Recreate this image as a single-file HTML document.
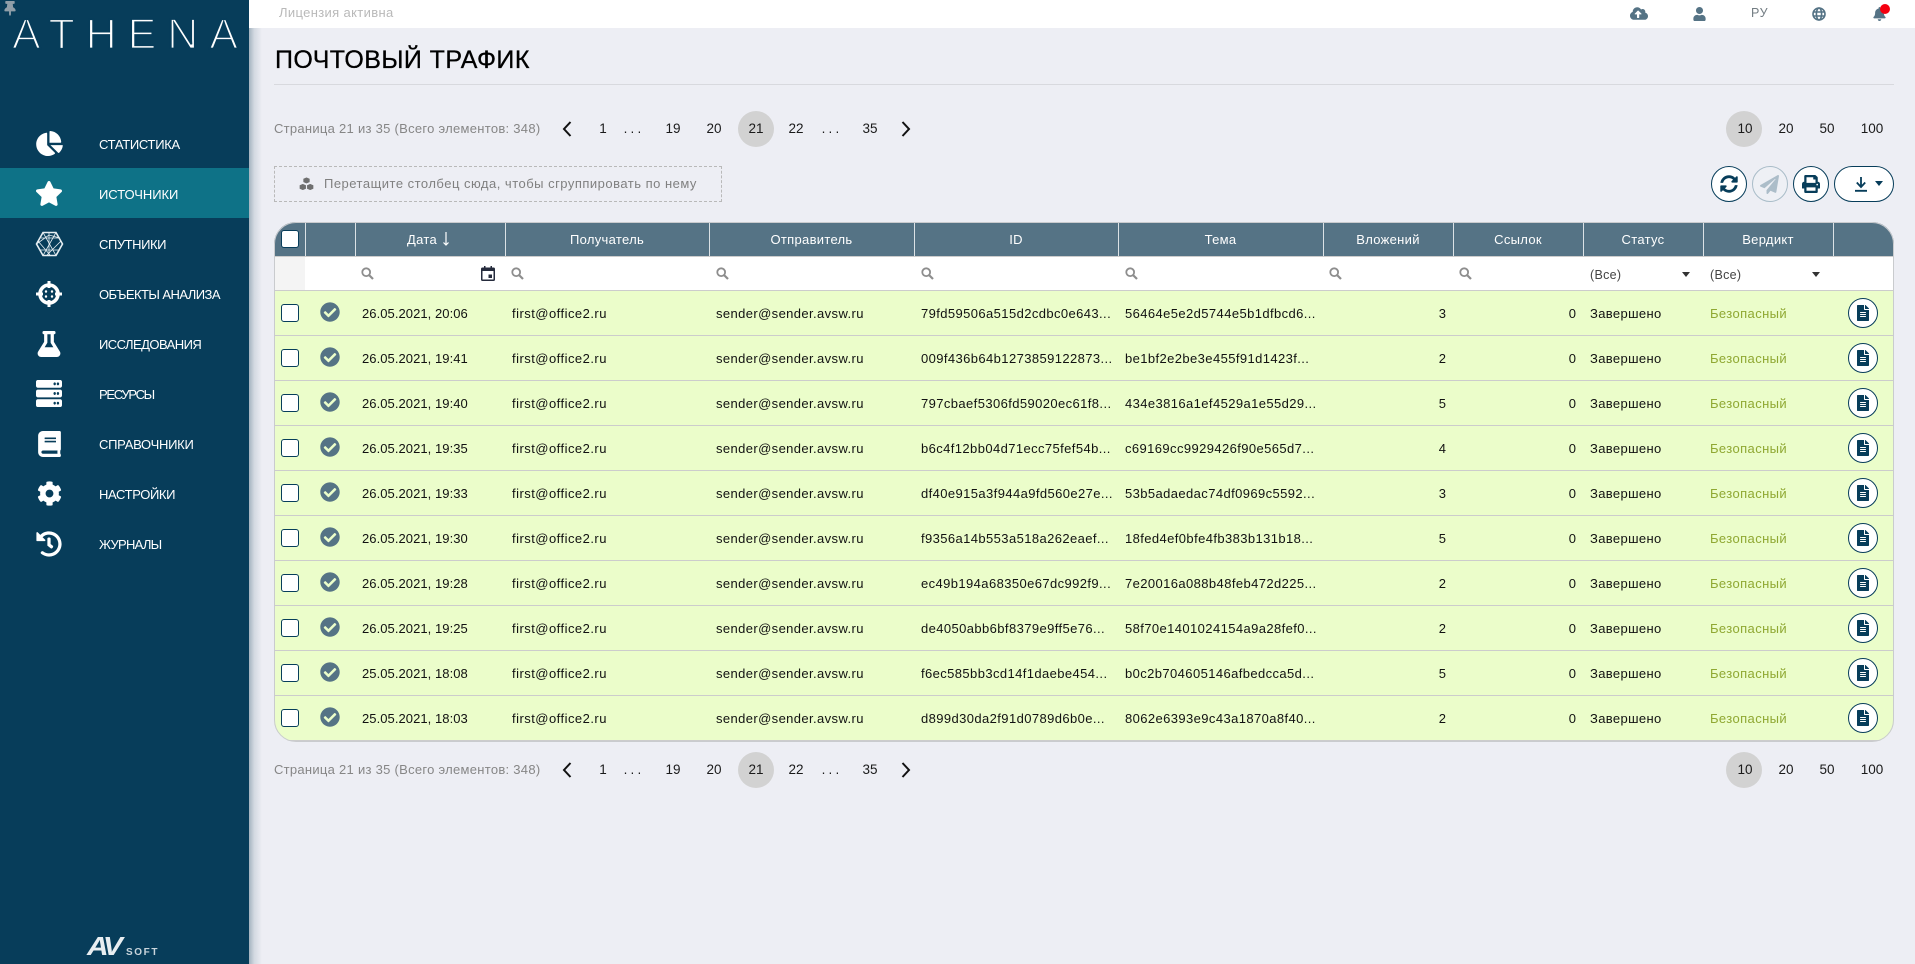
<!DOCTYPE html>
<html lang="ru"><head><meta charset="utf-8"><title>Почтовый трафик</title>
<style>
*{box-sizing:border-box;margin:0;padding:0}
html,body{width:1915px;height:964px;overflow:hidden;background:#edeef4;font-family:"Liberation Sans","Noto Sans CJK JP",sans-serif;color:#111}
.a{position:absolute;white-space:nowrap}
#side{position:absolute;left:0;top:0;width:249px;height:964px;background:#073d5a;z-index:3}
#shadow{position:absolute;left:249px;top:28px;width:13px;height:936px;background:linear-gradient(90deg,#a3b3bf,#d3d9e1 40%,#edeef4);z-index:1}
#top{position:absolute;left:249px;top:0;width:1666px;height:28px;background:#fff;z-index:2}
.m{position:absolute;left:99px;color:#fff;font-size:13px;letter-spacing:-.55px;line-height:52px;height:50px;white-space:nowrap}
.mi{position:absolute;fill:#fff}
.pg{position:absolute;font-size:13.5px;line-height:36px;height:36px;width:36px;text-align:center;color:#1a1a1a}
.cir{position:absolute;width:36px;height:36px;border-radius:50%;background:#d2d2d2}
.pi{position:absolute;font-size:13px;color:#868686;line-height:36px;height:36px;white-space:nowrap;letter-spacing:.28px}
.btn{position:absolute;top:166px;height:36px;width:36px;border:1.5px solid #073d5a;border-radius:18px;background:#fff}
#tbl{position:absolute;left:0;top:0;width:1915px;height:964px;clip-path:inset(222px 21px 222px 274px round 22px)}
#tborder{position:absolute;left:274px;top:222px;width:1620px;height:520px;border:1px solid #c9cbce;border-radius:22px;pointer-events:none;z-index:2}
.hd{position:absolute;left:274px;top:222px;width:1620px;height:34px;background:#557385}
.sep{position:absolute;top:222px;width:1px;height:34px;background:#dbe2e6}
.h{position:absolute;top:222px;height:34px;line-height:35px;text-align:center;color:#fff;font-size:13px;letter-spacing:.3px;white-space:nowrap}
.s{position:absolute;top:267px;width:13px;height:13px;fill:none;stroke:#8d8d8d;stroke-width:1.8}
.r{position:absolute;left:274px;width:1620px;height:45px;background:#ebfdca;border-bottom:1px solid #ccc}
.r span{position:absolute;top:0;line-height:46px;font-size:13px;white-space:nowrap;color:#111}
.cb{position:absolute;left:7px;top:13px;width:18px;height:18px;border:1.5px solid #073d5a;border-radius:3px;background:#fff}
.ok{position:absolute;left:46px;top:11px;width:20px;height:20px;fill:#557385}
.d{left:88px;letter-spacing:.06px}
.e{left:238px;letter-spacing:.47px}
.f{left:442px;letter-spacing:.39px}
.i{left:647px;letter-spacing:.4px}
.t{left:851px;letter-spacing:.4px}
.n1{right:448px}
.n2{right:318px}
.st{left:1316px;letter-spacing:.36px}
.v{left:1436px;color:#8fa832!important;letter-spacing:.4px}
.dc{position:absolute;left:1574px;top:7px;width:30px;height:30px;border:1.5px solid #073d5a;border-radius:50%;background:#fff}
.dc svg{position:absolute;left:7.5px;top:5.5px;width:12px;height:16px;fill:#073d5a}
</style></head><body>
<svg width="0" height="0" style="position:absolute"><defs>
<symbol id="ok" viewBox="0 0 512 512"><path d="M504 256c0 136.967-111.033 248-248 248S8 392.967 8 256 119.033 8 256 8s248 111.033 248 248zM227.314 387.314l184-184c6.248-6.248 6.248-16.379 0-22.627l-22.627-22.627c-6.248-6.249-16.379-6.249-22.628 0L216 308.118l-70.059-70.059c-6.248-6.248-16.379-6.248-22.628 0l-22.627 22.627c-6.248 6.248-6.248 16.379 0 22.627l104 104c6.249 6.249 16.379 6.249 22.628.001z"/></symbol>
<symbol id="file" viewBox="0 0 384 512"><path d="M224 136V0H24C10.7 0 0 10.7 0 24v464c0 13.3 10.7 24 24 24h336c13.3 0 24-10.7 24-24V160H248c-13.2 0-24-10.8-24-24zm64 236c0 6.6-5.4 12-12 12H108c-6.6 0-12-5.4-12-12v-8c0-6.6 5.4-12 12-12h168c6.6 0 12 5.4 12 12v8zm0-64c0 6.6-5.4 12-12 12H108c-6.6 0-12-5.4-12-12v-8c0-6.6 5.4-12 12-12h168c6.6 0 12 5.4 12 12v8zm0-72v8c0 6.6-5.4 12-12 12H108c-6.6 0-12-5.4-12-12v-8c0-6.6 5.4-12 12-12h168c6.6 0 12 5.4 12 12zm96-114.1v6.1H256V0h6.1c6.4 0 12.5 2.5 17 7l97.9 98c4.5 4.5 7 10.6 7 16.9z"/></symbol>
<symbol id="mag" viewBox="0 0 13 13"><circle cx="5.2" cy="5.2" r="3.9"/><path d="M8 8l4 4" stroke-width="2.2"/></symbol>
</defs></svg>

<div id="side">
<svg class="a" style="left:3px;top:1px;fill:#8f9ea8" width="14" height="15" viewBox="0 0 384 512"><path d="M298.028 214.267L285.793 96H328c13.255 0 24-10.745 24-24V24c0-13.255-10.745-24-24-24H56C42.745 0 32 10.745 32 24v48c0 13.255 10.745 24 24 24h42.207L85.972 214.267C37.465 236.82 0 277.261 0 328c0 13.255 10.745 24 24 24h136v104.007c0 1.242.289 2.467.845 3.578l24 48c2.941 5.882 11.364 5.893 14.311 0l24-48a8.008 8.008 0 0 0 .845-3.578V352h136c13.255 0 24-10.745 24-24-.001-51.183-37.983-91.42-85.973-113.733z"/></svg>
<svg class="a" style="left:0;top:0" width="249" height="60"><text x="12" y="48.500" textLength="226" font-family="Liberation Sans" font-size="43" fill="#fff" stroke="#073d5a" stroke-width="1.800">ATHENA</text></svg>

<div class="a" style="left:0;top:168px;width:249px;height:50px;background:#0e7287"></div>
<svg class="mi" style="left:36px;top:131px" width="27" height="25" viewBox="0 0 544 512"><path d="M527.79 288H290.5l158.03 158.03c6.04 6.04 15.98 6.53 22.19.68 38.7-36.46 65.32-85.61 73.13-140.86 1.34-9.46-6.51-17.85-16.06-17.85zm-15.83-64.8C503.72 103.74 408.26 8.28 288.8.04 279.68-.59 272 7.1 272 16.24V240h223.77c9.14 0 16.82-7.68 16.19-16.8zM224 288V50.71c0-9.55-8.39-17.4-17.84-16.06C86.99 51.49-4.1 155.6.14 280.37 4.5 408.51 114.83 513.59 243.03 511.98c50.4-.63 96.97-16.87 135.26-44.03 7.9-5.6 8.42-17.23 1.57-24.08L224 288z"/></svg>
<div class="m" style="top:119px;letter-spacing:-.3px">СТАТИСТИКА</div>
<svg class="mi" style="left:35px;top:181px" width="28" height="25" viewBox="0 0 576 512"><path d="M259.3 17.8L194 150.2 47.9 171.5c-26.2 3.8-36.7 36.1-17.7 54.6l105.7 103-25 145.5c-4.5 26.3 23.2 46 46.4 33.7L288 439.6l130.7 68.7c23.2 12.2 50.9-7.4 46.4-33.7l-25-145.5 105.7-103c19-18.5 8.5-50.8-17.7-54.6L382 150.2 316.7 17.8c-11.7-23.6-45.6-23.9-57.4 0z"/></svg>
<div class="m" style="top:169px;letter-spacing:-.05px">ИСТОЧНИКИ</div>
<svg class="a" style="left:35px;top:231px" width="29" height="26" viewBox="0 0 29 26" fill="none" stroke="#e6eef2"><path stroke-width="1.6" d="M8 1.5h13L27.5 13 21 24.5H8L1.5 13z"/><path stroke-width=".8" d="M8 1.5L21 24.5M21 1.5L8 24.5M1.5 13L14 4l11 3M3 10l12 14M26 10L12 24M6 7l18 0M5 19l19 0M14 2v22"/></svg>
<div class="m" style="top:219px;letter-spacing:-.45px">СПУТНИКИ</div>
<svg class="a" style="left:36px;top:281px" width="26" height="26" viewBox="0 0 26 26" fill="none" stroke="#fff"><circle cx="13" cy="13" r="9" stroke-width="3.6"/><path stroke-width="3" d="M13 0v7M13 19v7M0 13h7M19 13h7"/><path stroke-width="2.4" d="M10 10.5v.1M16 10.5v.1M10 15.5v.1M16 15.5v.1" stroke-linecap="round"/></svg>
<div class="m" style="top:269px">ОБЪЕКТЫ АНАЛИЗА</div>
<svg class="mi" style="left:37px;top:331px" width="24" height="26" viewBox="0 0 448 512"><path d="M437.2 403.5L320 215V64h8c13.3 0 24-10.7 24-24V24c0-13.3-10.7-24-24-24H120c-13.3 0-24 10.7-24 24v16c0 13.3 10.7 24 24 24h8v151L10.8 403.5C-18.5 450.6 15.3 512 70.9 512h306.2c55.7 0 89.4-61.5 60.1-108.5zM137.9 320l48.2-77.6c3.7-5.2 5.8-11.6 5.8-18.4V64h64v160c0 6.9 2.2 13.2 5.8 18.4l48.2 77.6h-172z"/></svg>
<div class="m" style="top:319px">ИССЛЕДОВАНИЯ</div>
<svg class="mi" style="left:36px;top:380px" width="26" height="27" viewBox="0 32 512 448" preserveAspectRatio="none"><path d="M480 160H32c-17.673 0-32-14.327-32-32V64c0-17.673 14.327-32 32-32h448c17.673 0 32 14.327 32 32v64c0 17.673-14.327 32-32 32zm-48-88c-13.255 0-24 10.745-24 24s10.745 24 24 24 24-10.745 24-24-10.745-24-24-24zm-64 0c-13.255 0-24 10.745-24 24s10.745 24 24 24 24-10.745 24-24-10.745-24-24-24zm112 248H32c-17.673 0-32-14.327-32-32v-64c0-17.673 14.327-32 32-32h448c17.673 0 32 14.327 32 32v64c0 17.673-14.327 32-32 32zm-48-88c-13.255 0-24 10.745-24 24s10.745 24 24 24 24-10.745 24-24-10.745-24-24-24zm-64 0c-13.255 0-24 10.745-24 24s10.745 24 24 24 24-10.745 24-24-10.745-24-24-24zm112 248H32c-17.673 0-32-14.327-32-32v-64c0-17.673 14.327-32 32-32h448c17.673 0 32 14.327 32 32v64c0 17.673-14.327 32-32 32zm-48-88c-13.255 0-24 10.745-24 24s10.745 24 24 24 24-10.745 24-24-10.745-24-24-24zm-64 0c-13.255 0-24 10.745-24 24s10.745 24 24 24 24-10.745 24-24-10.745-24-24-24z"/></svg>
<div class="m" style="top:369px;letter-spacing:-1.3px">РЕСУРСЫ</div>
<svg class="mi" style="left:38px;top:431px" width="23" height="26" viewBox="0 0 448 512"><path d="M448 360V24c0-13.3-10.7-24-24-24H96C43 0 0 43 0 96v320c0 53 43 96 96 96h328c13.3 0 24-10.7 24-24v-16c0-7.5-3.5-14.3-8.9-18.7-4.2-15.4-4.2-59.3 0-74.7 5.4-4.3 8.9-11.1 8.9-18.6zM128 134c0-3.3 2.7-6 6-6h212c3.3 0 6 2.7 6 6v20c0 3.3-2.7 6-6 6H134c-3.3 0-6-2.7-6-6v-20zm0 64c0-3.3 2.7-6 6-6h212c3.3 0 6 2.7 6 6v20c0 3.3-2.7 6-6 6H134c-3.3 0-6-2.7-6-6v-20zm253.4 250H96c-17.7 0-32-14.3-32-32 0-17.6 14.4-32 32-32h285.4c-1.9 17.1-1.9 46.9 0 64z"/></svg>
<div class="m" style="top:419px;letter-spacing:-.28px">СПРАВОЧНИКИ</div>
<svg class="mi" style="left:37px;top:481px" width="25" height="25" viewBox="0 0 512 512"><path d="M487.4 315.7l-42.6-24.6c4.3-23.2 4.3-47 0-70.2l42.6-24.6c4.9-2.8 7.1-8.6 5.5-14-11.1-35.6-30-67.8-54.7-94.6-3.8-4.1-10-5.1-14.8-2.3L380.8 110c-17.9-15.4-38.5-27.3-60.8-35.1V25.8c0-5.6-3.9-10.5-9.4-11.7-36.7-8.2-74.3-7.8-109.2 0-5.5 1.2-9.4 6.1-9.4 11.7V75c-22.2 7.9-42.8 19.8-60.8 35.1L88.7 85.5c-4.9-2.8-11-1.9-14.8 2.3-24.7 26.7-43.6 58.9-54.7 94.6-1.7 5.4.6 11.2 5.5 14L67.3 221c-4.3 23.2-4.3 47 0 70.2l-42.6 24.6c-4.9 2.8-7.1 8.6-5.5 14 11.1 35.6 30 67.8 54.7 94.6 3.8 4.1 10 5.1 14.8 2.3l42.6-24.6c17.9 15.4 38.5 27.3 60.8 35.1v49.2c0 5.6 3.9 10.5 9.4 11.7 36.7 8.2 74.3 7.8 109.2 0 5.5-1.2 9.4-6.1 9.4-11.7v-49.2c22.2-7.9 42.8-19.8 60.8-35.1l42.6 24.6c4.9 2.8 11 1.9 14.8-2.3 24.7-26.7 43.6-58.9 54.7-94.6 1.5-5.5-.7-11.3-5.6-14.1zM256 336c-44.1 0-80-35.9-80-80s35.9-80 80-80 80 35.9 80 80-35.9 80-80 80z"/></svg>
<div class="m" style="top:469px;letter-spacing:-.37px">НАСТРОЙКИ</div>
<svg class="mi" style="left:36px;top:531px" width="26" height="26" viewBox="0 0 512 512"><path d="M504 255.531c.253 136.64-111.18 248.372-247.82 248.468-59.015.042-113.223-20.53-155.822-54.911-11.077-8.94-11.905-25.541-1.839-35.607l11.267-11.267c8.609-8.609 22.353-9.551 31.891-1.984C173.062 425.135 212.781 440 256 440c101.705 0 184-82.311 184-184 0-101.705-82.311-184-184-184-48.814 0-93.149 18.969-126.068 49.932l50.754 50.754c10.08 10.08 2.941 27.314-11.313 27.314H24c-8.837 0-16-7.163-16-16V38.627c0-14.254 17.234-21.393 27.314-11.314l49.372 49.372C129.209 34.136 189.552 8 256 8c136.81 0 247.747 110.78 248 247.531zm-180.912 78.784l9.823-12.63c8.138-10.463 6.253-25.542-4.21-33.679L288 256.349V152c0-13.255-10.745-24-24-24h-16c-13.255 0-24 10.745-24 24v135.651l65.409 50.874c10.463 8.137 25.541 6.253 33.679-4.21z"/></svg>
<div class="m" style="top:519px;letter-spacing:-.75px">ЖУРНАЛЫ</div>

<div class="a" style="left:87px;top:934px;color:#e8eef1;font-size:26px;line-height:24px;font-weight:bold;font-style:italic;letter-spacing:-3px;transform:scaleX(1.15);transform-origin:left">AV</div>
<div class="a" style="left:126px;top:947px;color:#c9d5dc;font-size:10px;line-height:12px;font-weight:bold;letter-spacing:1.6px">SOFT</div>
</div>

<div id="shadow"></div>
<div id="top">
<div class="a" style="left:30px;top:0;line-height:26px;font-size:13px;color:#b9b9b9;letter-spacing:.35px">Лицензия активна</div>
<svg class="a" style="left:1381px;top:6px;fill:#557385" width="18" height="15" viewBox="0 0 640 512"><path d="M537.6 226.6c4.1-10.7 6.4-22.4 6.4-34.6 0-53-43-96-96-96-19.7 0-38.1 6-53.3 16.2C367 64.2 315.3 32 256 32c-88.4 0-160 71.6-160 160 0 2.7.1 5.4.2 8.1C40.2 219.8 0 273.2 0 336c0 79.5 64.5 144 144 144h368c70.7 0 128-57.3 128-128 0-61.9-44-113.6-102.4-125.4zM393.4 288H328v112c0 8.8-7.2 16-16 16h-48c-8.8 0-16-7.2-16-16V288h-65.4c-14.3 0-21.4-17.2-11.3-27.3l105.4-105.4c6.2-6.2 16.4-6.2 22.6 0l105.4 105.4c10.1 10.1 2.9 27.3-11.3 27.3z"/></svg>
<svg class="a" style="left:1444px;top:7px;fill:#557385" width="13" height="14" viewBox="0 0 448 512"><path d="M224 256c70.7 0 128-57.3 128-128S294.7 0 224 0 96 57.3 96 128s57.3 128 128 128zm89.6 32h-16.7c-22.2 10.2-46.9 16-72.9 16s-50.6-5.8-72.9-16h-16.7C60.2 288 0 348.2 0 422.4V464c0 26.5 21.5 48 48 48h352c26.5 0 48-21.5 48-48v-41.6c0-74.2-60.2-134.4-134.4-134.4z"/></svg>
<div class="a" style="left:1502px;top:0;line-height:27px;font-size:12.5px;color:#737d83;letter-spacing:.6px">РУ</div>
<svg class="a" style="left:1563px;top:7px" width="14" height="14" viewBox="0 0 14 14" fill="none" stroke="#557385" stroke-width="1.6"><circle cx="7" cy="7" r="6"/><ellipse cx="7" cy="7" rx="2.6" ry="6"/><path d="M1 5h12M1 9h12"/></svg>
<svg class="a" style="left:1624px;top:7px;fill:#557385" width="13" height="14" viewBox="0 0 448 512"><path d="M224 512c35.32 0 63.97-28.65 63.97-64H160.03c0 35.35 28.65 64 63.97 64zm215.39-149.71c-19.32-20.76-55.47-51.99-55.47-154.29 0-77.7-54.48-139.9-127.94-155.16V32c0-17.67-14.32-32-31.98-32s-31.98 14.33-31.98 32v20.84C118.56 68.1 64.08 130.3 64.08 208c0 102.3-36.15 133.53-55.47 154.29-6 6.45-8.66 14.16-8.61 21.71.11 16.4 12.98 32 32.1 32h383.8c19.12 0 32-15.6 32.1-32 .05-7.55-2.61-15.27-8.61-21.71z"/></svg>
<div class="a" style="left:1631px;top:4px;width:10px;height:10px;border-radius:50%;background:#f5000f"></div>
</div>

<div class="a" style="left:275px;top:45px;font-size:25px;line-height:30px;color:#000;letter-spacing:.42px;-webkit-text-stroke:.3px #000">ПОЧТОВЫЙ ТРАФИК</div>
<div class="a" style="left:274px;top:84px;width:1620px;height:1px;background:#d8d9de"></div>

<!-- top pager -->
<div class="pi" style="left:274px;top:111px">Страница 21 из 35 (Всего элементов: 348)</div>
<svg class="a" style="left:561px;top:121px" width="12" height="16" viewBox="0 0 12 16" fill="none" stroke="#111" stroke-width="2"><path d="M9.5 1L3 8l6.5 7"/></svg>
<div class="pg" style="left:585px;top:111px">1</div>
<div class="pg" style="left:616px;top:111px;letter-spacing:3.2px">...</div>
<div class="pg" style="left:655px;top:111px">19</div>
<div class="pg" style="left:696px;top:111px">20</div>
<div class="cir" style="left:738px;top:111px"></div>
<div class="pg" style="left:738px;top:111px">21</div>
<div class="pg" style="left:778px;top:111px">22</div>
<div class="pg" style="left:814px;top:111px;letter-spacing:3.2px">...</div>
<div class="pg" style="left:852px;top:111px">35</div>
<svg class="a" style="left:900px;top:121px" width="12" height="16" viewBox="0 0 12 16" fill="none" stroke="#111" stroke-width="2"><path d="M2.5 1L9 8l-6.5 7"/></svg>
<div class="cir" style="left:1726px;top:111px"></div>
<div class="pg" style="left:1727px;top:111px">10</div>
<div class="pg" style="left:1768px;top:111px">20</div>
<div class="pg" style="left:1809px;top:111px">50</div>
<div class="pg" style="left:1854px;top:111px">100</div>

<!-- group panel -->
<div class="a" style="left:274px;top:166px;width:448px;height:36px;border:1px dashed #b9b9b9"></div>
<svg class="a" style="left:299px;top:177px" width="15" height="14" viewBox="0 0 15 14" fill="#6f6f6f" stroke="#edeef4" stroke-width=".7"><path d="M7.5 0l3.5 1.5v3.800l-3.500 1.500L4 5.300V1.500z"/><path d="M3.800 6.500l3.500 1.500v4l-3.500 1.500L.3 12V8z"/><path d="M11.200 6.500l3.500 1.500v4l-3.500 1.500L7.700 12V8z"/></svg>
<div class="a" style="left:324px;top:166px;line-height:36px;font-size:13px;color:#808080;letter-spacing:.49px">Перетащите столбец сюда, чтобы сгруппировать по нему</div>

<!-- toolbar -->
<div class="btn" style="left:1711px"><svg class="a" style="left:8px;top:7.5px;fill:#073d5a" width="18" height="18" viewBox="0 0 512 512"><path d="M370.72 133.28C339.458 104.008 298.888 87.962 255.848 88c-77.458.068-144.328 53.178-162.791 126.85-1.344 5.363-6.122 9.15-11.651 9.15H24.103c-7.498 0-13.194-6.807-11.807-14.176C33.933 94.924 134.813 8 256 8c66.448 0 126.791 26.136 171.315 68.685L463.03 40.97C478.149 25.851 504 36.559 504 57.941V192c0 13.255-10.745 24-24 24H345.941c-21.382 0-32.09-25.851-16.971-40.971l41.75-41.749zM32 296h134.059c21.382 0 32.09 25.851 16.971 40.971l-41.75 41.75c31.262 29.273 71.835 45.319 114.876 45.28 77.418-.07 144.315-53.144 162.787-126.849 1.344-5.363 6.122-9.15 11.651-9.15h57.304c7.498 0 13.194 6.807 11.807 14.176C478.067 417.076 377.187 504 256 504c-66.448 0-126.791-26.136-171.315-68.685L48.97 471.03C33.851 486.149 8 475.441 8 454.059V320c0-13.255 10.745-24 24-24z"/></svg></div>
<div class="btn" style="left:1752px;border-color:#a9bcc8;background:#eef0f5"><svg class="a" style="left:7px;top:8px;fill:#acbdc9" width="19" height="19" viewBox="0 0 512 512"><path d="M476 3.2L12.5 270.6c-18.1 10.4-15.8 35.6 2.2 43.2L121 358.4l287.3-253.2c5.5-4.9 13.3 2.6 8.6 8.3L176 407v80.5c0 23.6 28.5 32.9 42.5 15.8L282 426l124.6 52.2c14.2 6 30.4-2.9 33-18.2l72-432C515 7.8 493.3-6.8 476 3.2z"/></svg></div>
<div class="btn" style="left:1793px"><svg class="a" style="left:8px;top:7.5px;fill:#073d5a" width="18" height="18" viewBox="0 0 512 512"><path d="M448 192V77.25c0-8.49-3.37-16.62-9.37-22.63L393.37 9.37c-6-6-14.14-9.37-22.63-9.37H96C78.33 0 64 14.33 64 32v160c-35.35 0-64 28.65-64 64v112c0 8.84 7.16 16 16 16h48v96c0 17.67 14.33 32 32 32h320c17.67 0 32-14.33 32-32v-96h48c8.84 0 16-7.16 16-16V256c0-35.35-28.65-64-64-64zm-64 256H128v-96h256v96zm0-224H128V64h192v48c0 8.84 7.16 16 16 16h48v96zm48 72c-13.25 0-24-10.75-24-24 0-13.26 10.75-24 24-24s24 10.74 24 24c0 13.25-10.75 24-24 24z"/></svg></div>
<div class="btn" style="left:1834px;width:60px"><svg class="a" style="left:18.5px;top:9.5px" width="14" height="15" viewBox="0 0 14 15" fill="none" stroke="#073d5a" stroke-width="1.8"><path d="M7 0v9M2.8 5.500L7 10l4.200-4.500M1 13.800h12"/></svg><svg class="a" style="left:39.5px;top:14px;fill:#073d5a" width="8" height="5" viewBox="0 0 8 5"><path d="M0 0h8L4 5z"/></svg></div>

<!-- table -->
<div id="tbl">
<div class="hd"></div>
<i class="sep" style="left:305px"></i><i class="sep" style="left:355px"></i><i class="sep" style="left:505px"></i><i class="sep" style="left:709px"></i><i class="sep" style="left:914px"></i><i class="sep" style="left:1118px"></i><i class="sep" style="left:1323px"></i><i class="sep" style="left:1453px"></i><i class="sep" style="left:1583px"></i><i class="sep" style="left:1703px"></i><i class="sep" style="left:1833px"></i>
<div class="a" style="left:281px;top:230px;width:18px;height:18px;border:1.5px solid #073d5a;border-radius:3px;background:#fff"></div>
<div class="h" style="left:407px">Дата</div>
<svg class="a" style="left:442px;top:232px" width="8" height="14" viewBox="0 0 8 14" fill="none" stroke="#fff" stroke-width="1.2"><path d="M4 0v13M1.500 10.500L4 13l2.500-2.500"/></svg>
<div class="h" style="left:505px;width:204px">Получатель</div>
<div class="h" style="left:709px;width:205px">Отправитель</div>
<div class="h" style="left:914px;width:204px">ID</div>
<div class="h" style="left:1118px;width:205px">Тема</div>
<div class="h" style="left:1323px;width:130px">Вложений</div>
<div class="h" style="left:1453px;width:130px">Ссылок</div>
<div class="h" style="left:1583px;width:120px">Статус</div>
<div class="h" style="left:1703px;width:130px">Вердикт</div>

<div class="a" style="left:274px;top:256px;width:1620px;height:35px;background:#fff;border-top:1px solid #ccc;border-bottom:1px solid #ccc"></div>
<div class="a" style="left:275px;top:257px;width:30px;height:33px;background:#f4f4f4"></div>
<svg class="s" style="left:361px"><use href="#mag"/></svg>
<svg class="a" style="left:481px;top:266px" width="14" height="15" viewBox="0 0 14 15"><path fill="#252b3c" d="M1.500 1.500h11A1.500 1.500 0 0 1 14 3v10.500a1.500 1.500 0 0 1-1.500 1.500h-11A1.500 1.500 0 0 1 0 13.500V3a1.500 1.500 0 0 1 1.500-1.500zM3 0h1.500v2H3zM9.500 0H11v2H9.500z"/><path fill="#fff" d="M1.500 5h11v8.500h-11z"/><path fill="#252b3c" d="M7.500 8.500h3.500v3.500H7.500z"/></svg>
<svg class="s" style="left:511px"><use href="#mag"/></svg>
<svg class="s" style="left:716px"><use href="#mag"/></svg>
<svg class="s" style="left:921px"><use href="#mag"/></svg>
<svg class="s" style="left:1125px"><use href="#mag"/></svg>
<svg class="s" style="left:1329px"><use href="#mag"/></svg>
<svg class="s" style="left:1459px"><use href="#mag"/></svg>
<div class="a" style="left:1590px;top:258px;line-height:34px;font-size:12.5px;color:#444;letter-spacing:.3px">(Все)</div>
<svg class="a" style="left:1682px;top:272px;fill:#333" width="8" height="5" viewBox="0 0 8 5"><path d="M0 0h8L4 5z"/></svg>
<div class="a" style="left:1710px;top:258px;line-height:34px;font-size:12.5px;color:#444;letter-spacing:.3px">(Все)</div>
<svg class="a" style="left:1812px;top:272px;fill:#333" width="8" height="5" viewBox="0 0 8 5"><path d="M0 0h8L4 5z"/></svg>

<div class="r" style="top:291px"><i class="cb"></i><svg class="ok"><use href="#ok"/></svg><span class="d">26.05.2021, 20:06</span><span class="e">first@office2.ru</span><span class="f">sender@sender.avsw.ru</span><span class="i">79fd59506a515d2cdbc0e643...</span><span class="t">56464e5e2d5744e5b1dfbcd6...</span><span class="n1">3</span><span class="n2">0</span><span class="st">Завершено</span><span class="v">Безопасный</span><div class="dc"><svg><use href="#file"/></svg></div></div>
<div class="r" style="top:336px"><i class="cb"></i><svg class="ok"><use href="#ok"/></svg><span class="d">26.05.2021, 19:41</span><span class="e">first@office2.ru</span><span class="f">sender@sender.avsw.ru</span><span class="i">009f436b64b1273859122873...</span><span class="t">be1bf2e2be3e455f91d1423f...</span><span class="n1">2</span><span class="n2">0</span><span class="st">Завершено</span><span class="v">Безопасный</span><div class="dc"><svg><use href="#file"/></svg></div></div>
<div class="r" style="top:381px"><i class="cb"></i><svg class="ok"><use href="#ok"/></svg><span class="d">26.05.2021, 19:40</span><span class="e">first@office2.ru</span><span class="f">sender@sender.avsw.ru</span><span class="i">797cbaef5306fd59020ec61f8...</span><span class="t">434e3816a1ef4529a1e55d29...</span><span class="n1">5</span><span class="n2">0</span><span class="st">Завершено</span><span class="v">Безопасный</span><div class="dc"><svg><use href="#file"/></svg></div></div>
<div class="r" style="top:426px"><i class="cb"></i><svg class="ok"><use href="#ok"/></svg><span class="d">26.05.2021, 19:35</span><span class="e">first@office2.ru</span><span class="f">sender@sender.avsw.ru</span><span class="i">b6c4f12bb04d71ecc75fef54b...</span><span class="t">c69169cc9929426f90e565d7...</span><span class="n1">4</span><span class="n2">0</span><span class="st">Завершено</span><span class="v">Безопасный</span><div class="dc"><svg><use href="#file"/></svg></div></div>
<div class="r" style="top:471px"><i class="cb"></i><svg class="ok"><use href="#ok"/></svg><span class="d">26.05.2021, 19:33</span><span class="e">first@office2.ru</span><span class="f">sender@sender.avsw.ru</span><span class="i">df40e915a3f944a9fd560e27e...</span><span class="t">53b5adaedac74df0969c5592...</span><span class="n1">3</span><span class="n2">0</span><span class="st">Завершено</span><span class="v">Безопасный</span><div class="dc"><svg><use href="#file"/></svg></div></div>
<div class="r" style="top:516px"><i class="cb"></i><svg class="ok"><use href="#ok"/></svg><span class="d">26.05.2021, 19:30</span><span class="e">first@office2.ru</span><span class="f">sender@sender.avsw.ru</span><span class="i">f9356a14b553a518a262eaef...</span><span class="t">18fed4ef0bfe4fb383b131b18...</span><span class="n1">5</span><span class="n2">0</span><span class="st">Завершено</span><span class="v">Безопасный</span><div class="dc"><svg><use href="#file"/></svg></div></div>
<div class="r" style="top:561px"><i class="cb"></i><svg class="ok"><use href="#ok"/></svg><span class="d">26.05.2021, 19:28</span><span class="e">first@office2.ru</span><span class="f">sender@sender.avsw.ru</span><span class="i">ec49b194a68350e67dc992f9...</span><span class="t">7e20016a088b48feb472d225...</span><span class="n1">2</span><span class="n2">0</span><span class="st">Завершено</span><span class="v">Безопасный</span><div class="dc"><svg><use href="#file"/></svg></div></div>
<div class="r" style="top:606px"><i class="cb"></i><svg class="ok"><use href="#ok"/></svg><span class="d">26.05.2021, 19:25</span><span class="e">first@office2.ru</span><span class="f">sender@sender.avsw.ru</span><span class="i">de4050abb6bf8379e9ff5e76...</span><span class="t">58f70e1401024154a9a28fef0...</span><span class="n1">2</span><span class="n2">0</span><span class="st">Завершено</span><span class="v">Безопасный</span><div class="dc"><svg><use href="#file"/></svg></div></div>
<div class="r" style="top:651px"><i class="cb"></i><svg class="ok"><use href="#ok"/></svg><span class="d">25.05.2021, 18:08</span><span class="e">first@office2.ru</span><span class="f">sender@sender.avsw.ru</span><span class="i">f6ec585bb3cd14f1daebe454...</span><span class="t">b0c2b704605146afbedcca5d...</span><span class="n1">5</span><span class="n2">0</span><span class="st">Завершено</span><span class="v">Безопасный</span><div class="dc"><svg><use href="#file"/></svg></div></div>
<div class="r" style="top:696px"><i class="cb"></i><svg class="ok"><use href="#ok"/></svg><span class="d">25.05.2021, 18:03</span><span class="e">first@office2.ru</span><span class="f">sender@sender.avsw.ru</span><span class="i">d899d30da2f91d0789d6b0e...</span><span class="t">8062e6393e9c43a1870a8f40...</span><span class="n1">2</span><span class="n2">0</span><span class="st">Завершено</span><span class="v">Безопасный</span><div class="dc"><svg><use href="#file"/></svg></div></div>
</div>
<div id="tborder"></div>

<!-- bottom pager -->
<div class="pi" style="left:274px;top:752px">Страница 21 из 35 (Всего элементов: 348)</div>
<svg class="a" style="left:561px;top:762px" width="12" height="16" viewBox="0 0 12 16" fill="none" stroke="#111" stroke-width="2"><path d="M9.5 1L3 8l6.5 7"/></svg>
<div class="pg" style="left:585px;top:752px">1</div>
<div class="pg" style="left:616px;top:752px;letter-spacing:3.2px">...</div>
<div class="pg" style="left:655px;top:752px">19</div>
<div class="pg" style="left:696px;top:752px">20</div>
<div class="cir" style="left:738px;top:752px"></div>
<div class="pg" style="left:738px;top:752px">21</div>
<div class="pg" style="left:778px;top:752px">22</div>
<div class="pg" style="left:814px;top:752px;letter-spacing:3.2px">...</div>
<div class="pg" style="left:852px;top:752px">35</div>
<svg class="a" style="left:900px;top:762px" width="12" height="16" viewBox="0 0 12 16" fill="none" stroke="#111" stroke-width="2"><path d="M2.5 1L9 8l-6.5 7"/></svg>
<div class="cir" style="left:1726px;top:752px"></div>
<div class="pg" style="left:1727px;top:752px">10</div>
<div class="pg" style="left:1768px;top:752px">20</div>
<div class="pg" style="left:1809px;top:752px">50</div>
<div class="pg" style="left:1854px;top:752px">100</div>
</body></html>
